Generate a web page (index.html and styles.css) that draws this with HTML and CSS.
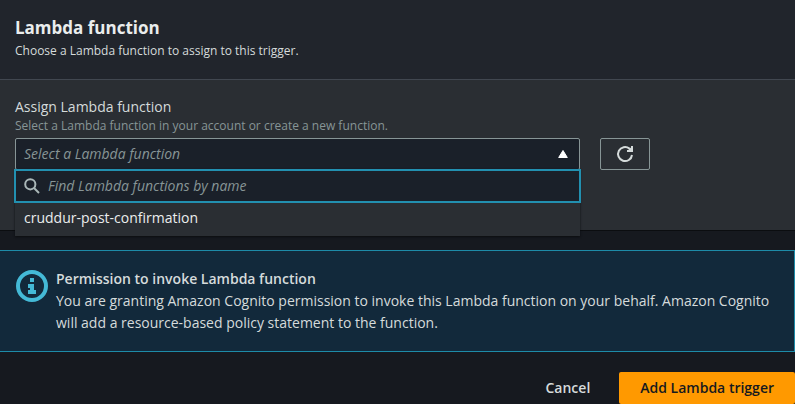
FILE: index.html
```html
<!DOCTYPE html>
<html lang="en">
<head>
<meta charset="utf-8">
<title>Lambda function</title>
<link rel="stylesheet" href="styles.css">
</head>
<body>
<main>
  <section class="panel">
    <header class="panel-header">
      <h2>Lambda function</h2>
      <p>Choose a Lambda function to assign to this trigger.</p>
    </header>
    <div class="panel-body">
      <label class="field-label" for="function-select">Assign Lambda function</label>
      <p class="field-hint">Select a Lambda function in your account or create a new function.</p>
      <div class="field-row">
        <div class="dropdown">
          <button class="dropdown-trigger" id="function-select" type="button" aria-haspopup="listbox" aria-expanded="true">
            <span>Select a Lambda function</span>
            <svg class="caret" width="10" height="8" viewBox="0 0 10 8" aria-hidden="true"><path d="M5 .5 9.3 7.5H.7Z" fill="currentColor" stroke="currentColor" stroke-linejoin="round"/></svg>
          </button>
          <div class="dropdown-menu">
            <div class="search">
              <svg width="16" height="16" viewBox="0 0 16 16" fill="none" stroke="currentColor" stroke-width="2" aria-hidden="true"><circle cx="6.3" cy="6.3" r="5.1"/><path d="m10 10 5 5"/></svg>
              <input type="search" placeholder="Find Lambda functions by name" aria-label="Find Lambda functions by name">
            </div>
            <ul class="options" role="listbox">
              <li role="option">cruddur-post-confirmation</li>
            </ul>
          </div>
        </div>
        <button class="refresh" type="button" aria-label="Refresh">
          <svg width="18" height="18" viewBox="0 0 18 18" fill="none" stroke="currentColor" stroke-width="2" aria-hidden="true"><path d="M16 10a7 7 0 1 1-2.6-6.4l1.6 1.4"/><path d="M16 1v5h-5"/><path d="M15.500 2v3.500H12z" fill="currentColor" stroke="none"/></svg>
        </button>
      </div>
    </div>
  </section>

  <section class="alert">
    <svg width="32" height="32" viewBox="0 0 32 32" aria-hidden="true"><circle cx="16" cy="16" r="14" fill="none" stroke="currentColor" stroke-width="4"/><path d="M14 8h4v4h-4zM12 14h6v6h2v4h-8v-4h2v-2h-2z" fill="currentColor"/></svg>
    <div class="alert-text">
      <h3>Permission to invoke Lambda function</h3>
      <p>You are granting Amazon Cognito permission to invoke this Lambda function on your behalf. Amazon Cognito will add a resource-based policy statement to the function.</p>
    </div>
  </section>

  <footer class="actions">
    <button class="cancel" type="button">Cancel</button>
    <button class="primary" type="submit">Add Lambda trigger</button>
  </footer>
</main>
</body>
</html>
```
FILE: styles.css
```css
* {
  box-sizing: border-box;
}

body {
  margin: 0;
  background: #16191f;
  color: #d5dbdb;
  font: 14px/22px "Open Sans", "Noto Sans", sans-serif;
}

h2, h3, p, ul {
  margin: 0;
  padding: 0;
}

button, input {
  font: inherit;
}

.panel {
  background: #2a2e33;
  border-bottom: 1px solid #0b0d10;
}

.panel-header {
  padding: 17px 15px 17px;
  background: #21252c;
  border-bottom: 1px solid #414750;
}

.panel-header h2 {
  color: #eaeded;
  font-size: 17px;
  line-height: 22px;
}

.panel-header p {
  padding-top: 1px;
  font-size: 12px;
}

.panel-body {
  padding: 16px 15px 60px;
}

.field-label {
  display: block;
}

.field-hint {
  color: #879596;
  font-size: 12px;
  line-height: 16px;
  padding-bottom: 4px;
}

.field-row {
  display: grid;
  grid-template-columns: 565fr 50px 110fr;
  column-gap: 20px;
}

.dropdown {
  position: relative;
}

.dropdown-trigger {
  display: flex;
  align-items: center;
  justify-content: space-between;
  width: 100%;
  height: 32px;
  padding: 0 11px 0 8px;
  background: #1a2029;
  border: 1px solid #879596;
  border-radius: 2px;
  color: #879596;
  font-style: italic;
}

.caret {
  color: #fff;
}

.dropdown-menu {
  position: absolute;
  top: 31px;
  left: 0;
  right: 0;
  background: #2a2e33;
  box-shadow: 0 1px 2px #0b0d10;
}

.search {
  display: flex;
  align-items: center;
  gap: 8px;
  height: 34px;
  margin: 0 -1px;
  padding: 0 8px;
  background: #1a2029;
  border: 2px solid #2290b0;
  color: #aab7b8;
}

.search input {
  flex: 1;
  min-width: 0;
  padding: 0;
  background: none;
  border: 0;
  outline: 0;
  color: #d5dbdb;
}

.search input::placeholder {
  color: #879596;
  font-style: italic;
  opacity: 1;
}

.options {
  list-style: none;
}

.options li {
  padding: 4px 9px 7px;
  color: #eaeded;
}

.refresh {
  display: grid;
  place-items: center;
  height: 32px;
  padding: 0;
  background: none;
  border: 1px solid #879596;
  border-radius: 2px;
  color: #d5dbdb;
}

.alert {
  display: flex;
  gap: 8px;
  margin-top: 19px;
  padding: 17px 16px;
  background: #12293b;
  border: 1px solid #1d8ba8;
  border-left: 0;
}

.alert svg {
  flex: none;
  margin-top: 2px;
  color: #44b9d6;
}

.alert h3 {
  font-size: 14px;
  font-weight: 600;
}

.actions {
  display: flex;
  justify-content: flex-end;
  gap: 8px;
  padding-top: 20px;
}

.actions button {
  height: 32px;
  padding: 0 21px;
  background: none;
  border: 0;
  border-radius: 2px;
  color: #d5dbdb;
  font-weight: 600;
}

.actions .primary {
  background: #ff9900;
  color: #16191f;
}
```
